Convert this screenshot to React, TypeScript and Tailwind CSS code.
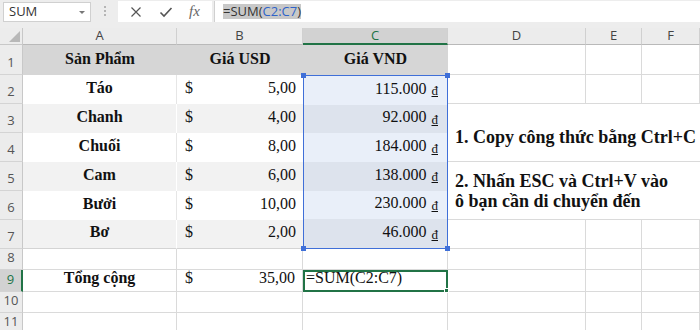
import React from "react";

const serif = "[font-family:Liberation_Serif,Times_New_Roman,serif]";
const ui = "[font-family:Open_Sans,Noto_Sans,sans-serif]";

const products = [
  { name: "Táo", usd: "5,00", vnd: "115.000" },
  { name: "Chanh", usd: "4,00", vnd: "92.000" },
  { name: "Chuối", usd: "8,00", vnd: "184.000" },
  { name: "Cam", usd: "6,00", vnd: "138.000" },
  { name: "Bưởi", usd: "10,00", vnd: "230.000" },
  { name: "Bơ", usd: "2,00", vnd: "46.000" },
];

const RowHead: React.FC<{ n: number; active?: boolean }> = ({ n, active }) => (
  <div
    className={`flex items-end justify-center pb-[2px] text-[13px] border-b border-[#d4d4d4] ${ui} ${
      active
        ? "bg-[#d2d2d2] text-[#217346] border-r-2 border-r-[#217346]"
        : "bg-[#ececec] text-[#555] border-r border-r-[#c8c8c8]"
    }`}
  >
    {n}
  </div>
);

const Blank: React.FC = () => <div className="border-r border-b border-[#dadada]" />;

const Handle: React.FC<{ pos: string }> = ({ pos }) => (
  <span className={`absolute w-[5px] h-[5px] bg-[#3f6fd8] ${pos}`} />
);

export default function App() {
  return (
    <div className="w-[700px] h-[330px] overflow-hidden bg-white select-none">
      {/* formula bar */}
      <div className="flex items-start h-[28px] bg-[#ededed] pt-[1px]">
        <div className={`ml-[3px] mt-[1px] w-[88px] h-[20px] bg-white border border-[#d0d0d0] flex items-center justify-between pl-[5px] pr-[5px] text-[13px] text-[#333] ${ui}`}>
          <span>SUM</span>
          <span className="w-0 h-0 border-l-[3px] border-r-[3px] border-t-[3px] border-l-transparent border-r-transparent border-t-[#777]" />
        </div>
        <div className="w-[27px] h-[20px] flex flex-col items-center justify-center gap-[2px]">
          <span className="w-[2px] h-[2px] bg-[#b5b5b5]" />
          <span className="w-[2px] h-[2px] bg-[#b5b5b5]" />
          <span className="w-[2px] h-[2px] bg-[#b5b5b5]" />
        </div>
        <div className="w-[94px] h-[21px] bg-white flex items-center justify-around px-[4px] text-[#555]">
          <svg width="12" height="12" viewBox="0 0 12 12" fill="none" stroke="#555" strokeWidth="1.2">
            <path d="M1.5 1.5l9 9M10.5 1.5l-9 9" />
          </svg>
          <svg width="14" height="12" viewBox="0 0 14 12" fill="none" stroke="#555" strokeWidth="1.6">
            <path d="M1.5 6.5l3.5 3.5 7.5-8" />
          </svg>
          <span className={`${serif} italic text-[15px] text-[#666] leading-none`}>fx</span>
        </div>
        <div className="ml-[2px] flex-1 h-[21px] bg-white border-l border-[#d0d0d0] flex items-center pl-[8px]">
          <span className={`bg-[#c8c8c8] text-[13px] leading-[15px] text-[#333] ${ui}`}>
            =SUM(<span className="text-[#2f63c8]">C2:C7</span>)
          </span>
        </div>
      </div>

      {/* sheet grid */}
      <div
        className={`grid grid-cols-[23px_154px_126px_145px_138px_56px_58px] grid-rows-[17px_30px_29px_29px_29px_29px_29px_29px_21px_22px_21px_21px] ${serif} text-[16px] text-[#111]`}
      >
        {/* column headers */}
        <div className="relative bg-[#ececec] border-r border-b border-[#c8c8c8]">
          <svg className="absolute right-[2px] bottom-[2px]" width="11" height="11" viewBox="0 0 11 11">
            <path d="M11 0V11H0Z" fill="#b8b8b8" />
          </svg>
        </div>
        {["A", "B", "C", "D", "E", "F"].map((c) => (
          <div
            key={c}
            className={`flex items-center justify-center text-[13px] ${ui} border-r border-[#d0d0d0] ${
              c === "C"
                ? "bg-[#d2d2d2] text-[#217346] border-b-2 border-b-[#217346]"
                : "bg-[#ececec] text-[#444] border-b border-b-[#b9b9b9]"
            }`}
          >
            {c}
          </div>
        ))}

        {/* row 1 */}
        <RowHead n={1} />
        <div className="bg-[#d6d6d6] flex items-end justify-center pb-[4px] font-bold">Sản Phẩm</div>
        <div className="bg-[#d6d6d6] flex items-end justify-center pb-[4px] font-bold">Giá USD</div>
        <div className="bg-[#d6d6d6] flex items-end justify-center pb-[4px] font-bold">Giá VND</div>
        <Blank />
        <Blank />
        <Blank />

        {/* rows 2 - 7 */}
        {products.map((p, i) => {
          const shaded = i % 2 === 1;
          const last = i === products.length - 1;
          const bg = shaded ? "bg-[#f2f2f2]" : "bg-white";
          return (
            <React.Fragment key={p.name}>
              <RowHead n={i + 2} />
              <div className={`${bg} flex items-end justify-center pb-[4px] font-bold border-r ${shaded ? "border-white" : "border-[#e6e6e6]"} ${last ? "border-b border-b-[#d4d4d4]" : ""}`}>
                {p.name}
              </div>
              <div className={`${bg} flex items-end justify-between pb-[4px] pl-[8px] pr-[7px] ${last ? "border-b border-[#d4d4d4]" : ""}`}>
                <span>$</span>
                <span>{p.usd}</span>
              </div>
              {i === 0 && (
                <div className="row-span-6 relative border border-[#3f6fd8] flex flex-col">
                  {products.map((q, j) => (
                    <div
                      key={q.name}
                      className={`flex-1 flex items-end justify-end pb-[4px] pr-[9px] ${j % 2 === 1 ? "bg-[#dde3ed]" : "bg-[#e9eff9]"}`}
                    >
                      {q.vnd} <span className="ml-[5px] text-[13px] underline">đ</span>
                    </div>
                  ))}
                  <Handle pos="-left-[3px] -top-[3px]" />
                  <Handle pos="-right-[3px] -top-[3px]" />
                  <Handle pos="-left-[3px] -bottom-[3px]" />
                  <Handle pos="-right-[3px] -bottom-[3px]" />
                </div>
              )}
              {i === 0 && (
                <>
                  <Blank />
                  <Blank />
                  <Blank />
                </>
              )}
              {(i === 1 || i === 3) && (
                <div className="col-span-3 row-span-2 border-b border-[#dadada] relative">
                  {i === 1 ? (
                    <div className="absolute left-[7px] top-[23px] whitespace-nowrap font-bold text-[18px] leading-[20px]">
                      1. Copy công thức bằng Ctrl+C
                    </div>
                  ) : (
                    <div className="absolute left-[7px] top-[9px] whitespace-nowrap font-bold text-[18px] leading-[20px]">
                      2. Nhấn ESC và Ctrl+V vào
                      <br />ô bạn cần di chuyển đến
                    </div>
                  )}
                </div>
              )}
              {last && (
                <>
                  <Blank />
                  <Blank />
                  <Blank />
                </>
              )}
            </React.Fragment>
          );
        })}

        {/* row 8 */}
        <RowHead n={8} />
        <Blank />
        <Blank />
        <Blank />
        <Blank />
        <Blank />
        <Blank />

        {/* row 9 */}
        <RowHead n={9} active />
        <div className="flex items-end justify-center pb-[1px] font-bold border-r border-b border-[#dadada]">Tổng cộng</div>
        <div className="flex items-end justify-between pb-[1px] pl-[8px] pr-[7px] border-r border-b border-[#dadada]">
          <span>$</span>
          <span>35,00</span>
        </div>
        <div className="relative border-2 border-[#217346] flex items-end pl-[1px]">
          =SUM(C2:C7)
          <span className="absolute -right-[3px] -bottom-[3px] w-[5px] h-[5px] bg-[#217346] border border-white" />
        </div>
        <Blank />
        <Blank />
        <Blank />

        {/* rows 10, 11 */}
        {[10, 11].map((n) => (
          <React.Fragment key={n}>
            <RowHead n={n} />
            <Blank />
            <Blank />
            <Blank />
            <Blank />
            <Blank />
            <Blank />
          </React.Fragment>
        ))}
      </div>
    </div>
  );
}
